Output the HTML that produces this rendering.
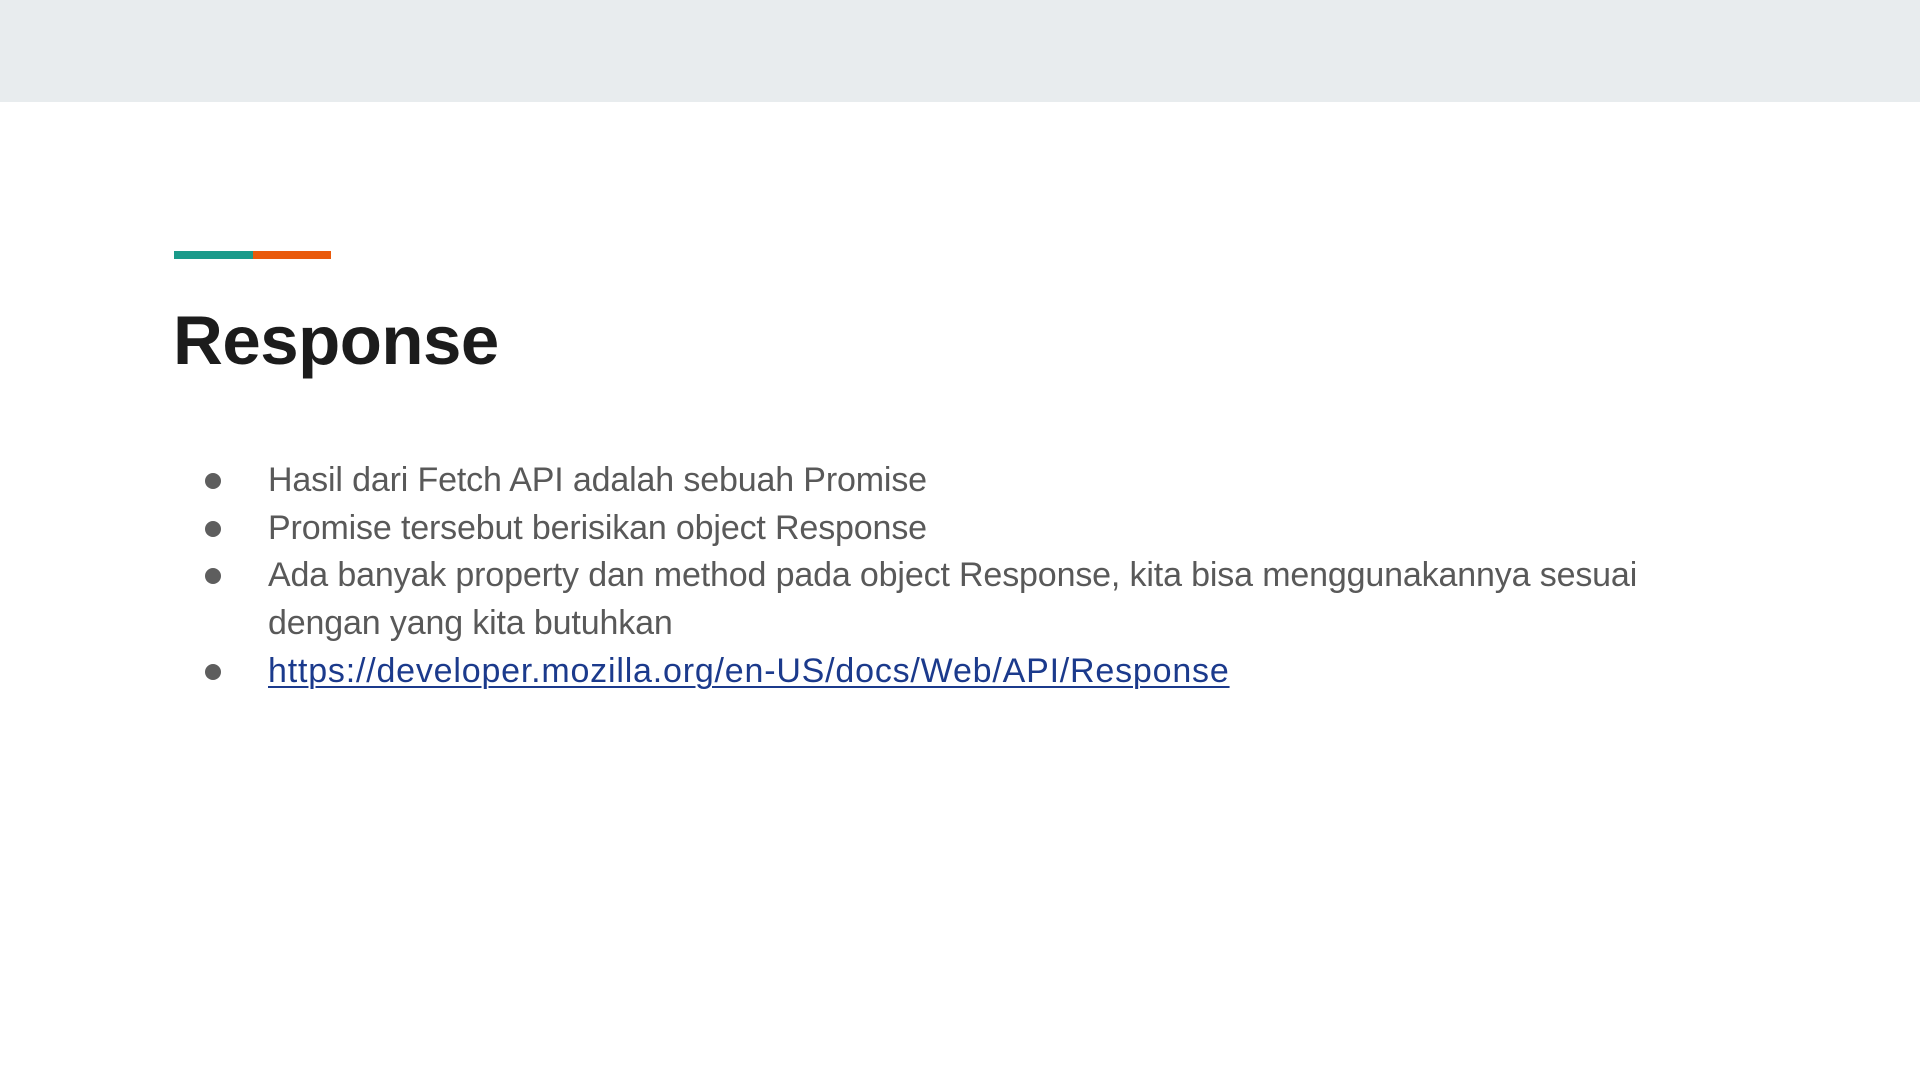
<!DOCTYPE html>
<html><head><meta charset="utf-8"><style>
html,body{margin:0;padding:0;}
body{width:1920px;height:1080px;background:#fff;position:relative;overflow:hidden;font-family:"Liberation Sans",sans-serif;}
.top{position:absolute;left:0;top:0;width:1920px;height:102px;background:#e8ecee;}
.bar1{position:absolute;left:174px;top:251px;width:79px;height:8px;background:#1a9a8a;}
.bar2{position:absolute;left:253px;top:251px;width:78px;height:8px;background:#e95a0c;}
h1{position:absolute;left:173px;top:296px;margin:0;font-size:69px;line-height:90px;font-weight:bold;color:#1c1c1c;letter-spacing:-0.5px;}
.line{position:absolute;left:268px;font-size:34px;line-height:40px;color:#595959;white-space:nowrap;letter-spacing:-0.15px;}
.dot{position:absolute;left:205px;width:16px;height:16px;border-radius:50%;background:#5e5e5e;}
a{color:#1b3a8c;text-decoration:underline;text-decoration-thickness:2px;text-underline-offset:4px;letter-spacing:0.8px;}
</style></head><body>
<div class="top"></div>
<div class="bar1"></div><div class="bar2"></div>
<h1>Response</h1>
<div class="dot" style="top:473px"></div>
<div class="line" style="top:460px">Hasil dari Fetch API adalah sebuah Promise</div>
<div class="dot" style="top:521px"></div>
<div class="line" style="top:508px">Promise tersebut berisikan object Response</div>
<div class="dot" style="top:568px"></div>
<div class="line" style="top:555px">Ada banyak property dan method pada object Response, kita bisa menggunakannya sesuai</div>
<div class="line" style="top:603px">dengan yang kita butuhkan</div>
<div class="dot" style="top:664px"></div>
<div class="line" style="top:651px"><a>https://developer.mozilla.org/en-US/docs/Web/API/Response</a></div>
</body></html>
